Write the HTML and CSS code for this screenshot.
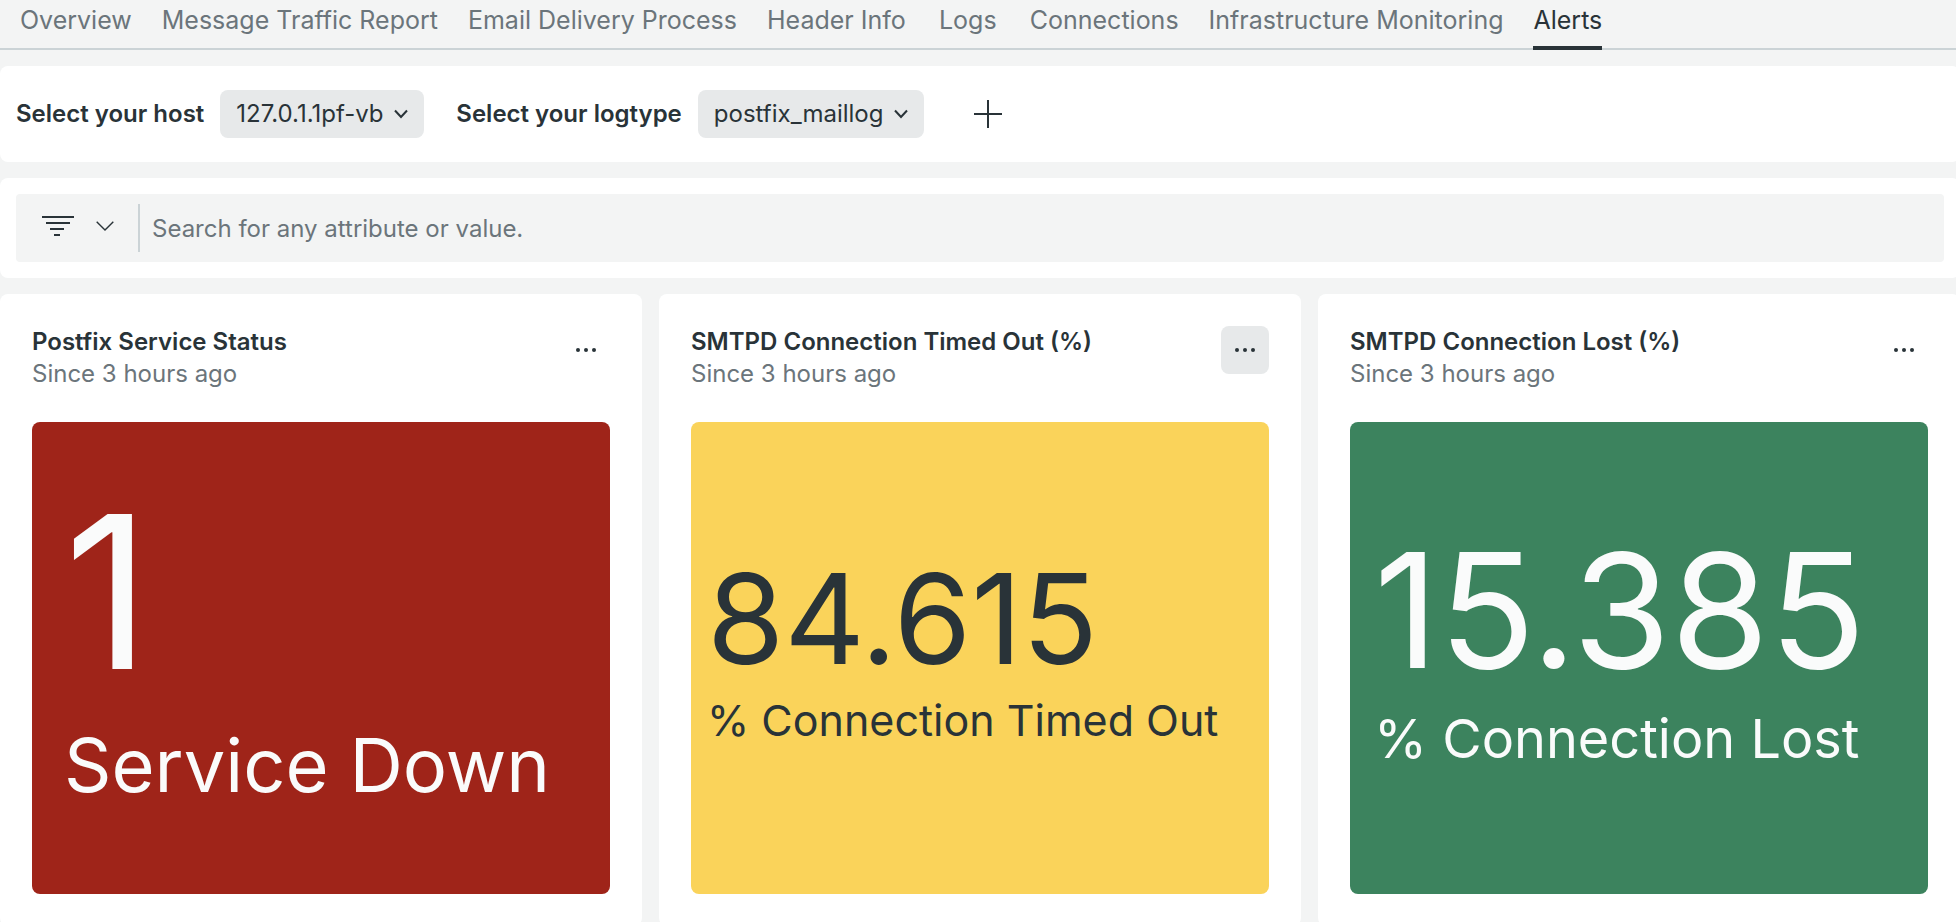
FILE: index.html
```html
<!DOCTYPE html>
<html lang="en">
<head>
<meta charset="utf-8">
<title>Alerts</title>
<link rel="stylesheet" href="styles.css">
</head>
<body>
<nav class="tabs">
  <a class="tab" href="#">Overview</a>
  <a class="tab" href="#">Message Traffic Report</a>
  <a class="tab" href="#">Email Delivery Process</a>
  <a class="tab" href="#">Header Info</a>
  <a class="tab" href="#">Logs</a>
  <a class="tab" href="#">Connections</a>
  <a class="tab" href="#">Infrastructure Monitoring</a>
  <a class="tab tab-active" href="#" aria-current="page">Alerts</a>
</nav>
<main class="board">
  <section class="panel variables">
    <div class="field">
      <label class="field-label" for="host">Select your host</label>
      <div class="picker">
        <select class="picker-select" id="host"><option>127.0.1.1pf-vb</option></select>
        <svg class="picker-arrow" width="14" height="10" viewBox="0 0 14 10" fill="none" stroke="currentColor" stroke-width="2"><path d="M1 1.5 7 8l6-6.5"/></svg>
      </div>
    </div>
    <div class="field">
      <label class="field-label" for="logtype">Select your logtype</label>
      <div class="picker">
        <select class="picker-select" id="logtype"><option>postfix_maillog</option></select>
        <svg class="picker-arrow" width="14" height="10" viewBox="0 0 14 10" fill="none" stroke="currentColor" stroke-width="2"><path d="M1 1.5 7 8l6-6.5"/></svg>
      </div>
    </div>
    <button class="add" type="button" aria-label="Add variable">
      <svg width="28" height="28" viewBox="0 0 28 28" fill="none" stroke="currentColor" stroke-width="2"><path d="M14 0v28M0 14h28"/></svg>
    </button>
  </section>
  <section class="panel filter">
    <div class="search">
      <button class="filter-button" type="button" aria-label="Filters">
        <svg width="32" height="20" viewBox="0 0 32 20" fill="none" stroke="currentColor" stroke-width="2"><path d="M0 1h32M4 7h24M8 13h14M12 19h6"/></svg>
        <svg width="18" height="10" viewBox="0 0 18 10" fill="none" stroke="currentColor" stroke-width="1.4"><path d="M.7 .7 9 9 17.300 .7"/></svg>
      </button>
      <input class="search-input" type="text" aria-label="Search" placeholder="Search for any attribute or value.">
    </div>
  </section>
  <div class="cards">
    <article class="panel card">
      <header class="card-head">
        <div><h2 class="card-title">Postfix Service Status</h2><p class="card-sub">Since 3 hours ago</p></div>
        <button class="more" type="button" aria-label="More options"><svg width="20" height="4" viewBox="0 0 20 4" fill="currentColor"><circle cx="2" cy="2" r="2"/><circle cx="10" cy="2" r="2"/><circle cx="18" cy="2" r="2"/></svg></button>
      </header>
      <div class="tile tile-critical"><span class="value">1</span><span class="label">Service Down</span></div>
    </article>
    <article class="panel card">
      <header class="card-head">
        <div><h2 class="card-title">SMTPD Connection Timed Out (%)</h2><p class="card-sub">Since 3 hours ago</p></div>
        <button class="more more-hover" type="button" aria-label="More options"><svg width="20" height="4" viewBox="0 0 20 4" fill="currentColor"><circle cx="2" cy="2" r="2"/><circle cx="10" cy="2" r="2"/><circle cx="18" cy="2" r="2"/></svg></button>
      </header>
      <div class="tile tile-warning"><span class="value">84.615</span><span class="label">% Connection Timed Out</span></div>
    </article>
    <article class="panel card">
      <header class="card-head">
        <div><h2 class="card-title">SMTPD Connection Lost (%)</h2><p class="card-sub">Since 3 hours ago</p></div>
        <button class="more" type="button" aria-label="More options"><svg width="20" height="4" viewBox="0 0 20 4" fill="currentColor"><circle cx="2" cy="2" r="2"/><circle cx="10" cy="2" r="2"/><circle cx="18" cy="2" r="2"/></svg></button>
      </header>
      <div class="tile tile-ok"><span class="value">15.385</span><span class="label">% Connection Lost</span></div>
    </article>
  </div>
</main>
</body>
</html>
```

FILE: styles.css
```css
* {
  box-sizing: border-box;
}

body {
  margin: 0;
  overflow: hidden;
  background: #f3f4f4;
  color: #293338;
  font-family: Inter, "Liberation Sans", sans-serif;
  font-size: 24px;
  line-height: 32px;
}

button,
input,
select {
  border: 0;
  padding: 0;
  background: none;
  color: inherit;
  font: inherit;
}

svg {
  display: block;
}

.tabs {
  display: flex;
  gap: 30px;
  padding: 4px 20px 0;
  background: linear-gradient(#cbd3d6, #cbd3d6) bottom / 100% 2px no-repeat;
  font-size: 25px;
}

.tab {
  min-width: 64px;
  height: 46px;
  color: #6b757b;
  text-align: center;
  text-decoration: none;
  white-space: nowrap;
}

.tab-active {
  border-bottom: 4px solid #293338;
  color: #293338;
}

/* The board runs slightly past the right edge of the window. */
.board {
  display: flex;
  flex-direction: column;
  gap: 16px;
  margin: 16px -4px 0 0;
}

.panel {
  border-radius: 8px;
  background: #fff;
}

.variables {
  display: flex;
  align-items: center;
  gap: 32px;
  padding: 24px 16px;
}

.field {
  display: flex;
  align-items: center;
  gap: 16px;
}

.field-label {
  font-weight: 600;
}

.picker {
  display: grid;
  align-items: center;
}

.picker-select,
.picker-arrow {
  grid-area: 1 / 1;
}

.picker-select {
  appearance: none;
  height: 48px;
  padding: 0 40px 0 16px;
  border-radius: 8px;
  background: #e7e9ea;
}

.picker-arrow {
  justify-self: end;
  margin-right: 16px;
  pointer-events: none;
}

.add {
  padding: 10px 18px;
}

.filter {
  padding: 16px;
}

.search {
  display: flex;
  align-items: center;
  height: 68px;
  border-radius: 4px;
  background: #f3f4f4;
}

.filter-button {
  display: flex;
  align-items: center;
  gap: 22px;
  height: 48px;
  padding: 0 24px 4px 26px;
  border-right: 2px solid #cbd3d6;
}

.search-input {
  flex: 1;
  height: 48px;
  padding: 0 12px;
  outline: 0;
}

.search-input::placeholder {
  color: #6b757b;
  opacity: 1;
}

.cards {
  display: grid;
  grid-template-columns: repeat(3, minmax(0, 1fr));
  gap: 17px;
}

.card {
  padding: 32px;
}

.card-head {
  display: flex;
  align-items: flex-start;
  justify-content: space-between;
  margin-bottom: 32px;
}

.card-title,
.card-sub {
  margin: 0;
  font-size: 24px;
  font-weight: 600;
}

.card-sub {
  color: #6b757b;
  font-weight: 400;
}

.more {
  display: grid;
  place-items: center;
  width: 48px;
  height: 48px;
  border-radius: 8px;
}

.more-hover {
  background: #e7e9ea;
}

.tile {
  display: flex;
  flex-direction: column;
  justify-content: center;
  min-height: 472px;
  border-radius: 8px;
  line-height: normal;
  white-space: nowrap;
}

.tile-critical {
  padding: 0 0 44px 32px;
  background: #9f2419;
  color: #fafbfb;
}

.tile-critical .value {
  font-size: 213px;
}

.tile-critical .label {
  font-size: 74px;
}

.tile-warning {
  padding: 0 0 28px 16px;
  background: #fad35a;
}

.tile-warning .value {
  font-size: 125px;
}

.tile-warning .label {
  font-size: 43px;
}

.tile-ok {
  padding: 0 0 32px 24px;
  background: #3c835e;
  color: #fafbfb;
}

.tile-ok .value {
  font-size: 159px;
}

.tile-ok .label {
  font-size: 54px;
}
```
